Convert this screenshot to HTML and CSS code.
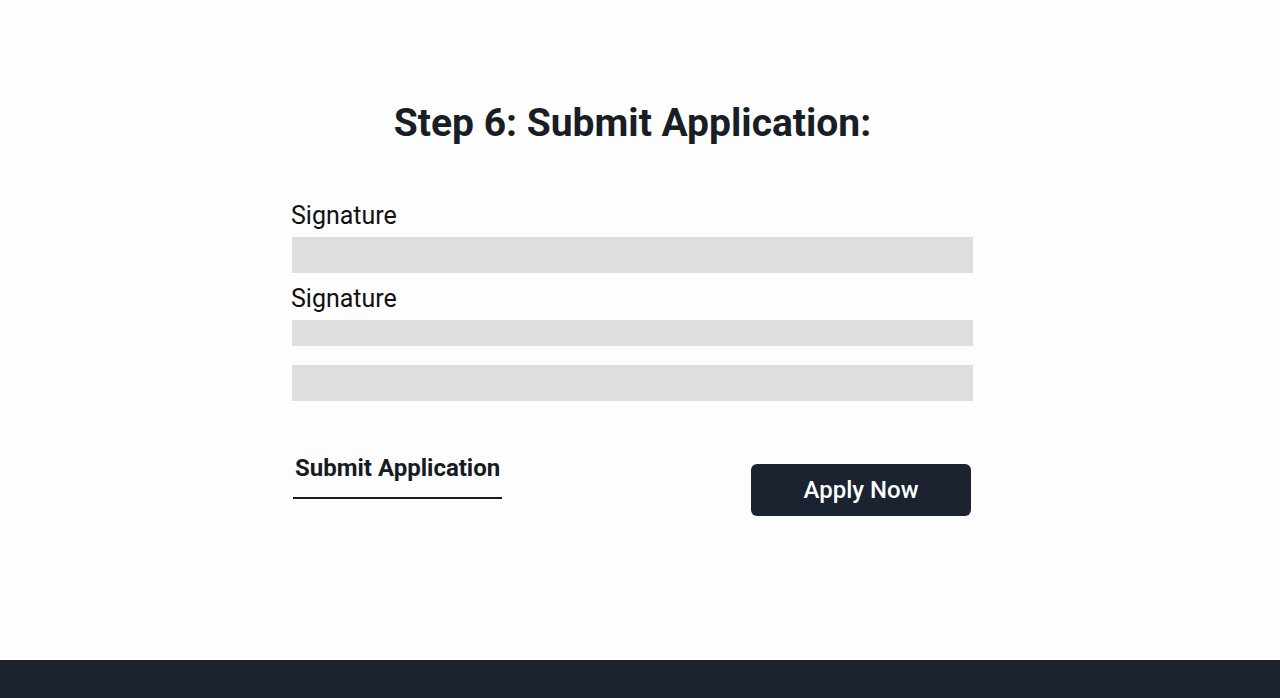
FILE: index.html
```html
<!DOCTYPE html>
<html lang="en">
<head>
  <meta charset="UTF-8">
  <meta name="viewport" content="width=device-width, initial-scale=1.0">
  <title>Step 6: Submit Application</title>
  <link rel="stylesheet" href="styles.css">
</head>
<body>
  <main class="page">
    <h1 class="step-title">Step 6: Submit Application:</h1>

    <form class="apply-form">
      <label class="field-label" for="sig-1">Signature</label>
      <input class="field field-tall" id="sig-1" type="text">

      <label class="field-label" for="sig-2">Signature</label>
      <input class="field field-short" id="sig-2" type="text">

      <input class="field field-tall" type="text" aria-label="Date">

      <div class="form-actions">
        <a class="tab-link" href="#">Submit Application</a>
        <button class="btn-apply" type="button">Apply Now</button>
      </div>
    </form>
  </main>

  <footer class="site-footer"></footer>
</body>
</html>
```

FILE: styles.css
```css
body {
  margin: 0;
  font-family: Roboto, "Liberation Sans", sans-serif;
  background: #fdfdfd;
  color: #161b24;
  min-height: 698px;
  display: flex;
  flex-direction: column;
}
.page {
  flex: 1;
  width: 681px;
  margin: 0 auto;
  padding: 100px 15px 0 0;
}
.step-title {
  margin: 0;
  font-size: 39px;
  line-height: 46px;
  font-weight: 700;
  text-align: center;
  color: #181d26;
}
.apply-form {
  display: flex;
  flex-direction: column;
  margin-top: 55px;
}
.field-label {
  font-size: 25px;
  line-height: 30px;
  color: #111;
  margin-left: -1px;
  margin-bottom: 6px;
}
.field {
  border: 0;
  background: #dedede;
  padding: 0;
  margin: 0 0 11px;
  display: block;
  width: 100%;
}
.field-tall {
  height: 36px;
}
.field-short {
  height: 26px;
  margin-bottom: 19px;
}
.form-actions {
  display: flex;
  justify-content: space-between;
  align-items: flex-start;
  margin-top: 42px;
  padding-right: 2px;
}
.tab-link {
  font-size: 24px;
  font-weight: 700;
  color: #161b24;
  text-decoration: none;
  padding: 0 2px 15px 2px;
  margin-left: 1px;
  border-bottom: 2px solid #161b24;
  line-height: 28px;
}
.btn-apply {
  margin-top: 10px;
  width: 220px;
  height: 52px;
  border: 0;
  border-radius: 6px;
  background: #1b2230;
  color: #fff;
  font-family: Roboto, "Liberation Sans", sans-serif;
  font-size: 24px;
  font-weight: 500;
  cursor: pointer;
}
.site-footer {
  height: 38px;
  background: #1b222d;
}
```
